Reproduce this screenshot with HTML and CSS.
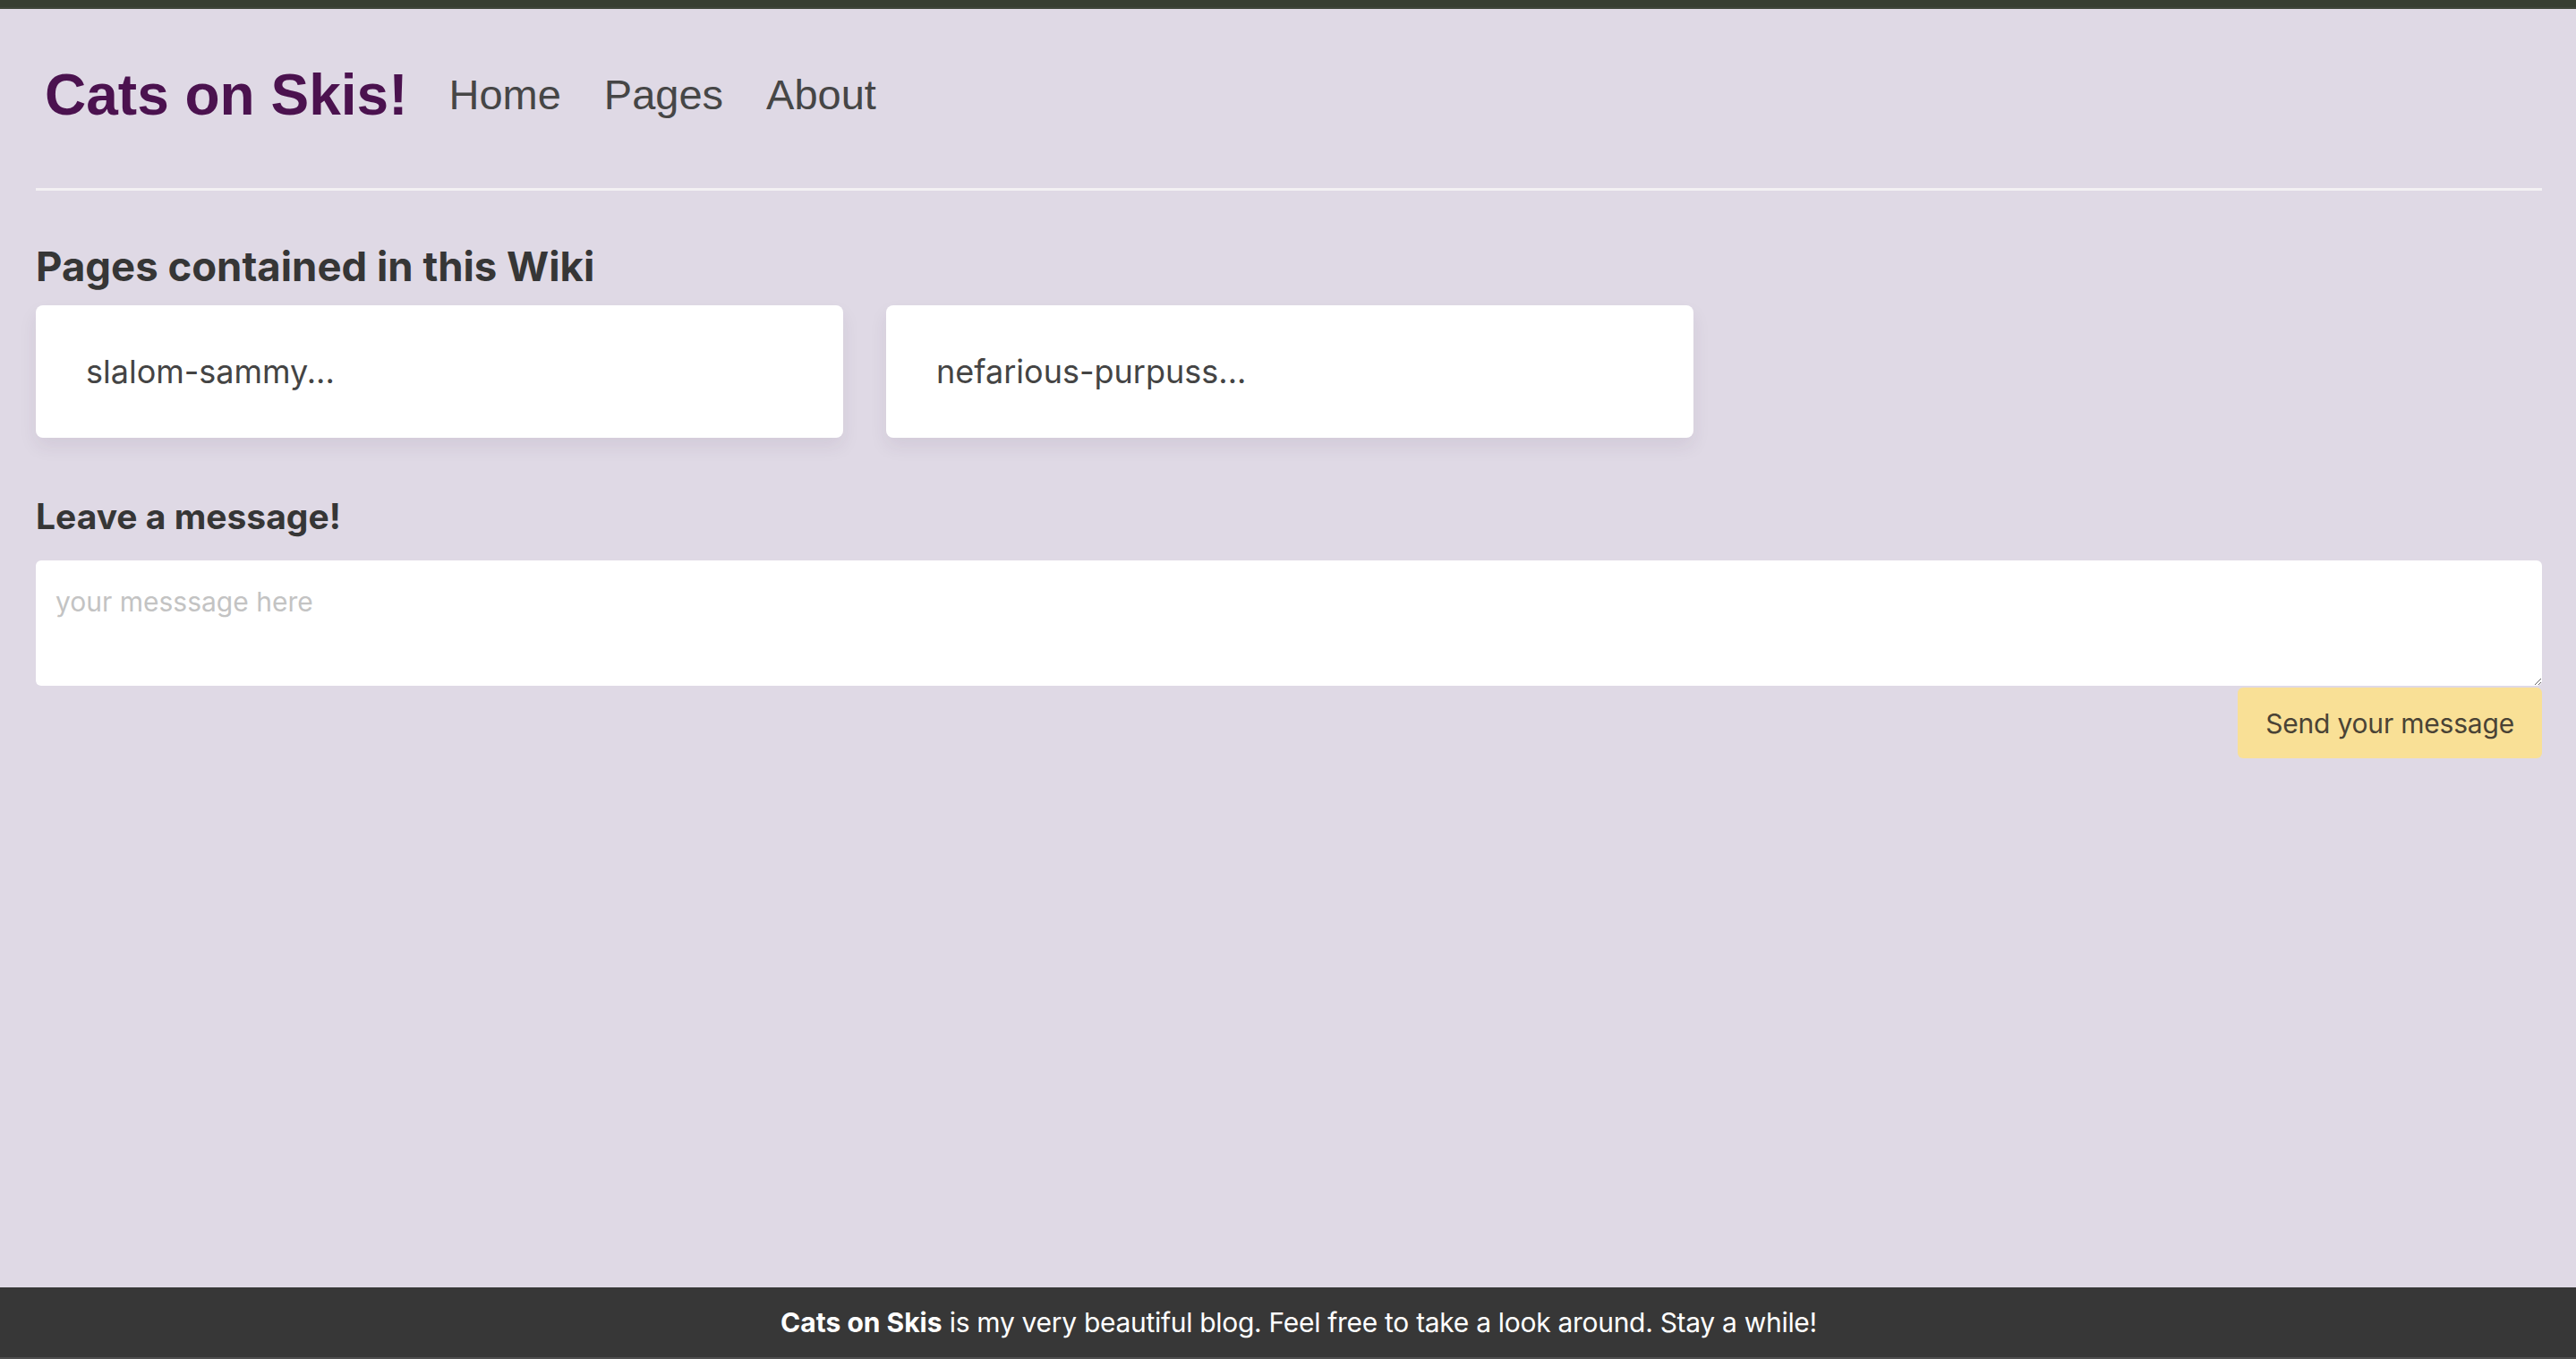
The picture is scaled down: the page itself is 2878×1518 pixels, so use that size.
FILE: index.html
```html
<!DOCTYPE html>
<html lang="en">
<head>
<meta charset="utf-8">
<title>Cats on Skis!</title>
<link rel="stylesheet" href="styles.css">
</head>
<body>
<div class="topbar"></div>
<main class="main">
  <header class="header">
    <a class="brand" href="#">Cats on Skis!</a>
    <nav class="nav">
      <a class="nav-link" href="#">Home</a>
      <a class="nav-link" href="#">Pages</a>
      <a class="nav-link" href="#">About</a>
    </nav>
  </header>
  <hr class="divider">
  <h2 class="section-title">Pages contained in this Wiki</h2>
  <div class="cards">
    <a class="card" href="#">slalom-sammy...</a>
    <a class="card" href="#">nefarious-purpuss...</a>
  </div>
  <h3 class="message-title">Leave a message!</h3>
  <form class="message-form">
    <textarea class="message-input" placeholder="your messsage here"></textarea>
    <button class="send-btn" type="button">Send your message</button>
  </form>
</main>
<footer class="footer">
  <p class="footer-text"><strong>Cats on Skis</strong> is my very beautiful blog. Feel free to take a look around. Stay a while!</p>
</footer>
</body>
</html>
```

FILE: styles.css
```css
* { box-sizing: border-box; }

html, body { height: 100%; }

body {
  margin: 0;
  min-height: 100vh;
  display: flex;
  flex-direction: column;
  background: #dfd9e5;
  font-family: "Inter", "Noto Sans", sans-serif;
  color: #333333;
}

.topbar {
  height: 10px;
  background: #373e32;
  border-bottom: 2px solid #3f463b;
}

.main {
  padding: 0 38px 0 40px;
}

.header {
  display: flex;
  align-items: center;
  padding: 0 0 9px 10px;
  height: 200px;
}

.brand {
  font-family: "Liberation Sans", Arial, sans-serif;
  font-weight: 700;
  font-size: 64px;
  line-height: 74px;
  color: #4b124f;
  text-decoration: none;
}

.nav {
  display: flex;
  align-items: center;
  margin-left: 46px;
  gap: 48px;
}

.nav-link {
  font-family: "Liberation Sans", Arial, sans-serif;
  font-size: 47px;
  color: #464646;
  text-decoration: none;
}

.divider {
  margin: 0;
  border: none;
  height: 3px;
  background: #f3f1f3;
}

.section-title {
  margin: 57px 0 0;
  font-size: 45.5px;
  line-height: 56px;
  font-weight: 700;
  color: #363636;
}

.cards {
  display: flex;
  gap: 48px;
  margin-top: 15px;
}

.card {
  width: 902px;
  height: 148px;
  display: flex;
  align-items: center;
  padding-left: 56px;
  background: #ffffff;
  border-radius: 8px;
  box-shadow: 0 10px 20px rgba(60, 40, 80, 0.08);
  font-size: 36px;
  color: #444444;
  text-decoration: none;
}

.message-title {
  margin: 64px 0 0;
  font-size: 39px;
  line-height: 48px;
  font-weight: 700;
  color: #363636;
}

.message-form {
  display: flex;
  flex-direction: column;
  align-items: flex-end;
  margin-top: 25px;
}

.message-input {
  display: block;
  width: 100%;
  height: 140px;
  border: none;
  border-radius: 6px;
  padding: 28px 22px;
  font-family: "Inter", "Noto Sans", sans-serif;
  font-size: 30px;
  color: #333333;
  background: #ffffff;
  outline: none;
}

.message-input::placeholder {
  color: #c3c3c3;
}

.send-btn {
  margin-top: 2px;
  height: 79px;
  padding: 0 31px;
  border: none;
  border-radius: 6px;
  background: #f9e096;
  font-family: "Inter", "Noto Sans", sans-serif;
  font-size: 30px;
  letter-spacing: -0.2px;
  color: #4a4335;
  cursor: pointer;
}

.footer {
  margin-top: auto;
  height: 80px;
  padding-left: 24px;
  background: #373737;
  border-bottom: 2px solid #4e4e4e;
  display: flex;
  align-items: center;
  justify-content: center;
}

.footer-text {
  margin: 0;
  font-size: 30px;
  letter-spacing: -0.3px;
  color: #ffffff;
}

.footer-text strong {
  font-weight: 700;
  letter-spacing: 0;
}
```
